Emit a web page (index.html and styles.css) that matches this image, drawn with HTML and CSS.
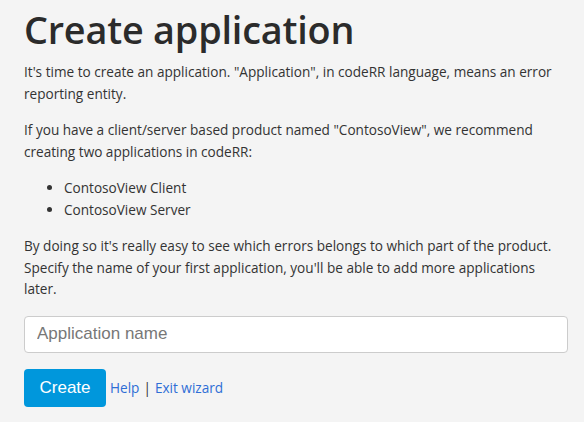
FILE: index.html
```html
<!DOCTYPE html>
<html>
<head>
<meta charset="utf-8">
<link rel="stylesheet" href="styles.css">
</head>
<body>
<main class="wizard">
  <h1 class="title">Create application</h1>
  <p class="text">It's time to create an application. "Application", in codeRR language, means an error reporting entity.</p>
  <p class="text">If you have a client/server based product named "ContosoView", we recommend creating two applications in codeRR:</p>
  <ul class="list">
    <li>ContosoView Client</li>
    <li>ContosoView Server</li>
  </ul>
  <p class="text">By doing so it's really easy to see which errors belongs to which part of the product. Specify the name of your first application, you'll be able to add more applications later.</p>
  <form class="form">
    <input class="field" type="text" placeholder="Application name">
    <div class="actions">
      <button class="btn" type="button">Create</button>
      <a class="link" href="#">Help</a><span class="sep">|</span><a class="link" href="#">Exit wizard</a>
    </div>
  </form>
</main>
</body>
</html>
```

FILE: styles.css
```css
html, body {
  margin: 0;
  padding: 0;
  background: #f4f4f4;
}
body {
  font-family: "Open Sans", "Noto Sans", sans-serif;
  font-size: 13.6px;
  line-height: 21.5px;
  color: #333;
}
.wizard {
  padding: 3px 16px 0 24px;
}
.title {
  margin: 0 0 4px 0;
  font-size: 37.8px;
  line-height: 54px;
  font-weight: 600;
  color: #2b2b2b;
  letter-spacing: -0.2px;
}
.text {
  margin: 0 0 15px 0;
}
.list {
  margin: 0 0 15px 0;
  padding-left: 40px;
}
.form {
  margin: 0;
  padding-top: 1px;
}
.field {
  display: block;
  box-sizing: border-box;
  width: 100%;
  height: 37px;
  padding: 6px 12px;
  border: 1px solid #ccc;
  border-radius: 4px;
  background: #fff;
  font-family: "Liberation Sans", Arial, sans-serif;
  font-size: 17px;
  color: #555;
  margin: 0 0 16px 0;
}
.field::placeholder {
  color: #777;
}
.actions {
  display: flex;
  align-items: center;
}
.btn {
  width: 82px;
  height: 38px;
  border: none;
  border-radius: 4px;
  background: #0097dc;
  color: #fff;
  font-family: "Liberation Sans", Arial, sans-serif;
  font-size: 17px;
  padding: 0;
  margin-right: 4px;
}
.link {
  color: #2e6ed6;
  text-decoration: none;
  font-size: 13.6px;
}
.sep {
  margin: 0 4px;
  color: #333;
}
```
